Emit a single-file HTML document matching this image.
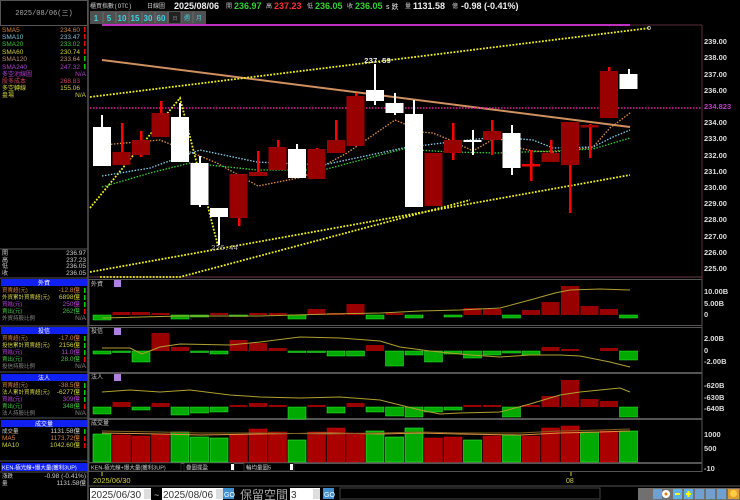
<!DOCTYPE html>
<html><head><meta charset="utf-8"><style>
html,body{margin:0;padding:0;background:#000;width:740px;height:500px;overflow:hidden}
svg{display:block}
text{font-family:"Liberation Sans","Noto Sans CJK TC",sans-serif}
.m{font-family:"Liberation Mono","Noto Sans CJK TC",monospace}
</style></head><body>
<svg width="740" height="500" viewBox="0 0 740 500" xmlns="http://www.w3.org/2000/svg">
<rect width="740" height="500" fill="#000"/>
<rect x="0.5" y="0.5" width="87" height="25" fill="#000" stroke="#555"/>
<text x="44" y="15" font-size="7" fill="#aaa" text-anchor="middle" class="m">2025/08/06(三)</text>
<line x1="88" y1="0" x2="88" y2="500" stroke="#555" stroke-width="1.5"/>
<g font-size="6.5" class="m">
<text x="2" y="32" fill="#d08040">SMA5</text><text x="80" y="32" fill="#d08040" text-anchor="end">234.60</text>
<text x="2" y="39" fill="#80c0e0">SMA10</text><text x="80" y="39" fill="#80c0e0" text-anchor="end">233.47</text>
<text x="2" y="46" fill="#40c040">SMA20</text><text x="80" y="46" fill="#40c040" text-anchor="end">233.02</text>
<text x="2" y="54" fill="#d0d040">SMA60</text><text x="80" y="54" fill="#d0d040" text-anchor="end">230.74</text>
<text x="2" y="61" fill="#c09070">SMA120</text><text x="80" y="61" fill="#c09070" text-anchor="end">233.64</text>
<text x="2" y="69" fill="#b040d0">SMA240</text><text x="80" y="69" fill="#b040d0" text-anchor="end">247.32</text>
<text x="2" y="76" fill="#b040d0" font-size="6">多空池線圖</text><text x="86" y="76" fill="#b040d0" text-anchor="end">N/A</text>
<text x="2" y="83" fill="#d04060" font-size="6">股多成本</text><text x="80" y="83" fill="#d04060" text-anchor="end">268.83</text>
<text x="2" y="90" fill="#d0d040" font-size="6">多空轉線</text><text x="80" y="90" fill="#d0d040" text-anchor="end">155.06</text>
<text x="2" y="97" fill="#d0d040" font-size="6">盎場</text><text x="86" y="97" fill="#d0d040" text-anchor="end">N/A</text>
</g>
<g fill="#e00"><rect x="84" y="27" width="1.5" height="5"/><rect x="84" y="34" width="1.5" height="5"/><rect x="84" y="41" width="1.5" height="5"/><rect x="84" y="49" width="1.5" height="5"/></g>
<g fill="#0c0"><rect x="84" y="56" width="1.5" height="5"/><rect x="84" y="64" width="1.5" height="5"/></g>
<line x1="0" y1="249" x2="88" y2="249" stroke="#555"/>
<g font-size="6.5" class="m" fill="#ccc">
<text x="2" y="255" font-size="6">開</text><text x="86" y="255" text-anchor="end">236.97</text>
<text x="2" y="262" font-size="6">高</text><text x="86" y="262" text-anchor="end">237.23</text>
<text x="2" y="268" font-size="6">低</text><text x="86" y="268" text-anchor="end">236.05</text>
<text x="2" y="275" font-size="6">收</text><text x="86" y="275" text-anchor="end">236.05</text>
</g>
<g font-size="6.5" class="m">
<rect x="1" y="279" width="86" height="7" fill="#1020f0"/><text x="44" y="285" fill="#fff" text-anchor="middle" font-size="6">外資</text>
<text x="2" y="292" fill="#d08040" font-size="5.5">買賣超(元)</text><text x="80" y="292" fill="#d08040" text-anchor="end">-12.8億</text>
<text x="2" y="299" fill="#d0d040" font-size="5.5">外資累計買賣超(元)</text><text x="80" y="299" fill="#d0d040" text-anchor="end">6898億</text>
<text x="2" y="306" fill="#b040d0" font-size="5.5">買進(元)</text><text x="80" y="306" fill="#b040d0" text-anchor="end">250億</text>
<text x="2" y="313" fill="#40c040" font-size="5.5">賣出(元)</text><text x="80" y="313" fill="#40c040" text-anchor="end">262億</text>
<text x="2" y="320" fill="#888" font-size="5.5">外資持股比例</text><text x="86" y="320" fill="#888" text-anchor="end">N/A</text>
<rect x="1" y="327" width="86" height="7" fill="#1020f0"/><text x="44" y="333" fill="#fff" text-anchor="middle" font-size="6">投信</text>
<text x="2" y="340" fill="#d08040" font-size="5.5">買賣超(元)</text><text x="80" y="340" fill="#d08040" text-anchor="end">-17.0億</text>
<text x="2" y="347" fill="#d0d040" font-size="5.5">投信累計買賣超(元)</text><text x="80" y="347" fill="#d0d040" text-anchor="end">2156億</text>
<text x="2" y="354" fill="#b040d0" font-size="5.5">買進(元)</text><text x="80" y="354" fill="#b040d0" text-anchor="end">11.0億</text>
<text x="2" y="361" fill="#40c040" font-size="5.5">賣出(元)</text><text x="80" y="361" fill="#40c040" text-anchor="end">28.0億</text>
<text x="2" y="368" fill="#888" font-size="5.5">投信持股比例</text><text x="86" y="368" fill="#888" text-anchor="end">N/A</text>
<rect x="1" y="374" width="86" height="7" fill="#1020f0"/><text x="44" y="380" fill="#fff" text-anchor="middle" font-size="6">法人</text>
<text x="2" y="387" fill="#d08040" font-size="5.5">買賣超(元)</text><text x="80" y="387" fill="#d08040" text-anchor="end">-38.5億</text>
<text x="2" y="394" fill="#d0d040" font-size="5.5">法人累計買賣超(元)</text><text x="80" y="394" fill="#d0d040" text-anchor="end">-6277億</text>
<text x="2" y="401" fill="#b040d0" font-size="5.5">買進(元)</text><text x="80" y="401" fill="#b040d0" text-anchor="end">309億</text>
<text x="2" y="408" fill="#40c040" font-size="5.5">賣出(元)</text><text x="80" y="408" fill="#40c040" text-anchor="end">348億</text>
<text x="2" y="415" fill="#888" font-size="5.5">法人持股比例</text><text x="86" y="415" fill="#888" text-anchor="end">N/A</text>
<rect x="1" y="420" width="86" height="7" fill="#1020f0"/><text x="44" y="426" fill="#fff" text-anchor="middle" font-size="6">成交量</text>
<text x="2" y="433" fill="#ccc" font-size="5.5">成交量</text><text x="80" y="433" fill="#ccc" text-anchor="end">1131.58億</text>
<text x="2" y="440" fill="#d08040">MA5</text><text x="80" y="440" fill="#d08040" text-anchor="end">1173.72億</text>
<text x="2" y="447" fill="#d0d040">MA10</text><text x="80" y="447" fill="#d0d040" text-anchor="end">1042.60億</text>
<rect x="1" y="463" width="86" height="8" fill="#1020f0"/><text x="2" y="469.5" fill="#fff" font-size="5.5">KEN-極光線+爆大量(獲利3UP)</text>
<text x="2" y="478" fill="#ccc" font-size="5.5">漲跌</text><text x="86" y="478" fill="#ccc" text-anchor="end">-0.98 (-0.41%)</text>
<text x="2" y="485" fill="#ccc" font-size="5.5">量</text><text x="86" y="485" fill="#ccc" text-anchor="end">1131.58億</text>
</g>
<g fill="#0c0"><rect x="84" y="288" width="1.5" height="5"/><rect x="84" y="295" width="1.5" height="5"/><rect x="84" y="302" width="1.5" height="5"/><rect x="84" y="336" width="1.5" height="5"/><rect x="84" y="343" width="1.5" height="5"/><rect x="84" y="350" width="1.5" height="5"/><rect x="84" y="383" width="1.5" height="5"/><rect x="84" y="390" width="1.5" height="5"/><rect x="84" y="397" width="1.5" height="5"/><rect x="84" y="429" width="1.5" height="5"/></g>
<g fill="#e00"><rect x="84" y="309" width="1.5" height="5"/><rect x="84" y="357" width="1.5" height="5"/><rect x="84" y="404" width="1.5" height="5"/><rect x="84" y="436" width="1.5" height="5"/><rect x="84" y="443" width="1.5" height="5"/></g>
<line x1="0" y1="278" x2="88" y2="278" stroke="#555"/><line x1="0" y1="326" x2="88" y2="326" stroke="#555"/><line x1="0" y1="372" x2="88" y2="372" stroke="#555"/><line x1="0" y1="418" x2="88" y2="418" stroke="#555"/><line x1="0" y1="461" x2="88" y2="461" stroke="#555"/><line x1="0" y1="472" x2="88" y2="472" stroke="#555"/>

<text x="90" y="8" fill="#ccc" font-size="6" class="m">櫃買指數(OTC)</text>
<text x="147" y="8" fill="#ccc" font-size="6" class="m">日線圖</text>
<text x="174" y="9" fill="#eee" font-size="9" font-weight="bold">2025/08/06</text>
<text x="226" y="8" fill="#ccc" font-size="6">開</text><text x="234" y="9" fill="#30d030" font-size="9" font-weight="bold">236.97</text>
<text x="266" y="8" fill="#ccc" font-size="6">高</text><text x="274" y="9" fill="#ff3030" font-size="9" font-weight="bold">237.23</text>
<text x="307" y="8" fill="#ccc" font-size="6">低</text><text x="315" y="9" fill="#30d030" font-size="9" font-weight="bold">236.05</text>
<text x="347" y="8" fill="#ccc" font-size="6">收</text><text x="355" y="9" fill="#30d030" font-size="9" font-weight="bold">236.05</text>
<text x="386" y="9" fill="#eee" font-size="7">s 跌</text>
<text x="405" y="8" fill="#ccc" font-size="6">量</text><text x="413" y="9" fill="#eee" font-size="9" font-weight="bold">1131.58</text>
<text x="452" y="8" fill="#ccc" font-size="6">億</text><text x="461" y="9" fill="#eee" font-size="9" font-weight="bold">-0.98 (-0.41%)</text>
<rect x="90" y="11" width="116" height="13" fill="#505050"/>
<g font-size="8" fill="#40d0e0" font-weight="bold" text-anchor="middle">
<text x="96" y="21">1</text><text x="109" y="21">5</text><text x="122" y="21">10</text><text x="135" y="21">15</text><text x="148" y="21">30</text><text x="161" y="21">60</text>
</g>
<rect x="169" y="12" width="12" height="11" fill="#222"/>
<text x="175" y="20" font-size="5" fill="#888" text-anchor="middle">日</text>
<text x="187" y="20" font-size="6" fill="#40d0e0" text-anchor="middle">週</text>
<text x="199" y="20" font-size="6" fill="#40d0e0" text-anchor="middle">月</text>
<g stroke="#777" stroke-width="0.7"><line x1="103" y1="12" x2="103" y2="23"/><line x1="116" y1="12" x2="116" y2="23"/><line x1="129" y1="12" x2="129" y2="23"/><line x1="142" y1="12" x2="142" y2="23"/><line x1="155" y1="12" x2="155" y2="23"/><line x1="168" y1="12" x2="168" y2="23"/><line x1="181" y1="12" x2="181" y2="23"/><line x1="193" y1="12" x2="193" y2="23"/></g>
<rect x="102" y="24" width="528" height="2" fill="#c030c0"/>
<line x1="630" y1="25" x2="702" y2="25" stroke="#5a2a3a"/>
<line x1="702" y1="25" x2="702" y2="462" stroke="#5a2a3a"/>
<line x1="88" y1="277" x2="702" y2="277" stroke="#6a3a4a"/>

<g font-size="7.5" fill="#ddd" class="m" font-weight="bold">
<text x="704" y="44">239.00</text><text x="704" y="60">238.00</text><text x="704" y="77">237.00</text><text x="704" y="93">236.00</text><text x="704" y="109" fill="#c040c0">234.823</text><text x="704" y="125">234.00</text><text x="704" y="141">233.00</text><text x="704" y="158">232.00</text><text x="704" y="174">231.00</text><text x="704" y="190">230.00</text><text x="704" y="206">229.00</text><text x="704" y="222">228.00</text><text x="704" y="239">227.00</text><text x="704" y="255">226.00</text><text x="704" y="271">225.00</text>
</g>

<path d="M102 60 Q370 95 630 127" stroke="#d09060" stroke-width="2" fill="none"/>
<line x1="90" y1="108" x2="702" y2="108" stroke="#e020a0" stroke-width="1.5" stroke-dasharray="1.5 1.5"/>
<g stroke="#f0f020" stroke-width="1.8" stroke-dasharray="1.8 1.5" fill="none">
<line x1="90" y1="97" x2="650" y2="28"/>
<line x1="90" y1="272" x2="630" y2="175"/>
<polyline points="100,277 180,277 470,200"/>
<polyline points="90,208 180,98 218,246"/>
</g>
<circle cx="649" cy="28" r="1.5" fill="none" stroke="#ddd" stroke-width="0.7"/>
<polyline points="102,145 160,140 190,152 217,163 258,186 303,177 347,153 395,120 407,125 420,132 433,133 450,140 473,151 497,137 515,147 533,151 553,152 573,150 593,147 610,128 630,113" stroke="#e09040" stroke-width="1.3" stroke-dasharray="1.5 1.5" fill="none"/>
<polyline points="102,176 150,168 200,150 257,162 323,165 403,148 450,142 497,137 533,140 553,148 593,147 613,137 630,130" stroke="#80d0f0" stroke-width="1.3" stroke-dasharray="1.5 1.5" fill="none"/>
<polyline points="102,187 150,173 190,163 257,170 323,170 403,149 450,152 497,153 553,151 593,149 630,138" stroke="#30d030" stroke-width="1.3" stroke-dasharray="1.5 1.5" fill="none"/>

<g>
<rect x="101" y="115" width="2" height="51" fill="#fff"/><rect x="93" y="127" width="18" height="39" fill="#fff"/>
<rect x="121" y="123" width="2.5" height="42" fill="#f00"/><rect x="112.5" y="152" width="18" height="13" fill="#900"/>
<rect x="140" y="131" width="2.5" height="26" fill="#f00"/><rect x="132" y="140" width="18" height="15" fill="#900"/>
<rect x="160" y="101" width="2.5" height="36" fill="#f00"/><rect x="151.5" y="113" width="18" height="24" fill="#900"/>
<rect x="179" y="103" width="2" height="59" fill="#fff"/><rect x="171" y="117" width="18" height="45" fill="#fff"/>
<rect x="199" y="156" width="2" height="51" fill="#fff"/><rect x="190.5" y="163" width="18" height="42" fill="#fff"/>
<rect x="218" y="208" width="2" height="37" fill="#fff"/><rect x="210" y="208" width="18" height="9" fill="#fff"/>
<rect x="238" y="174" width="2.5" height="52" fill="#f00"/><rect x="229.5" y="174" width="18" height="44" fill="#900"/>
<rect x="257" y="151" width="2.5" height="25" fill="#f00"/><rect x="249" y="172" width="18" height="4" fill="#900"/>
<rect x="277" y="140" width="2.5" height="30" fill="#f00"/><rect x="268.5" y="147" width="18" height="23" fill="#900"/>
<rect x="296" y="144" width="2" height="34" fill="#fff"/><rect x="288" y="149" width="18" height="29" fill="#fff"/>
<rect x="316" y="148" width="2.5" height="31" fill="#f00"/><rect x="307.5" y="149" width="18" height="30" fill="#900"/>
<rect x="335" y="120" width="2.5" height="33" fill="#f00"/><rect x="327" y="140" width="18" height="13" fill="#900"/>
<rect x="355" y="93" width="2.5" height="53" fill="#f00"/><rect x="346.5" y="96" width="18" height="50" fill="#900"/>
<rect x="374" y="64" width="2" height="41" fill="#fff"/><rect x="366" y="90" width="18" height="11" fill="#fff"/>
<rect x="394" y="93" width="2" height="22" fill="#fff"/><rect x="385.5" y="103" width="18" height="10" fill="#fff"/>
<rect x="413" y="100" width="2" height="107" fill="#fff"/><rect x="405" y="114" width="18" height="93" fill="#fff"/>
<rect x="424.5" y="153" width="18" height="53" fill="#900"/>
<rect x="452" y="123" width="2.5" height="37" fill="#f00"/><rect x="444" y="140" width="18" height="13" fill="#900"/>
<rect x="472" y="130" width="2" height="25" fill="#fff"/><rect x="463.5" y="140" width="18" height="2" fill="#fff"/>
<rect x="491" y="120" width="2.5" height="35" fill="#f00"/><rect x="483" y="131" width="18" height="9" fill="#900"/>
<rect x="511" y="125" width="2" height="50" fill="#fff"/><rect x="502.5" y="133" width="18" height="35" fill="#fff"/>
<rect x="530" y="150" width="2.5" height="31" fill="#f00"/><rect x="522" y="164" width="18" height="2.5" fill="#e00"/>
<rect x="550" y="140" width="2.5" height="22" fill="#f00"/><rect x="541.5" y="153" width="18" height="9" fill="#900"/>
<rect x="569" y="122" width="2.5" height="91" fill="#f00"/><rect x="561" y="122" width="18" height="43" fill="#900"/>
<rect x="589" y="124" width="2.5" height="34" fill="#f00"/><rect x="580.5" y="125" width="18" height="2.5" fill="#900"/>
<rect x="608" y="67" width="2.5" height="51" fill="#f00"/><rect x="600" y="71" width="18" height="47" fill="#900"/>
<rect x="628" y="69" width="2" height="20" fill="#fff"/><rect x="619.5" y="74" width="18" height="15" fill="#fff"/>
</g>
<text x="364" y="63" font-size="7.5" fill="#eee" class="m" font-weight="bold">237.59</text>
<text x="211" y="250" font-size="7.5" fill="#bbb" class="m">226.44</text>

<g fill="none" stroke="#555" stroke-width="1">
<rect x="89" y="279.5" width="613" height="46"/>
<rect x="89" y="327.5" width="613" height="45"/>
<rect x="89" y="373.5" width="613" height="45"/>
<rect x="89" y="419.5" width="613" height="43"/>
<rect x="89" y="463.5" width="613" height="8"/>
</g>
<g font-size="6" fill="#ccc" class="m">
<text x="91" y="286">外資</text><text x="91" y="333">投信</text><text x="91" y="379">法人</text><text x="91" y="425">成交量</text>
</g>
<g fill="#b080e0"><rect x="114" y="280" width="7" height="7"/><rect x="114" y="328" width="7" height="7"/><rect x="114" y="374" width="7" height="7"/></g>
<g font-size="7.5" fill="#ddd" class="m" font-weight="bold">
<text x="704" y="294">10.00B</text><text x="704" y="306">5.00B</text><text x="704" y="317">0</text>
<text x="704" y="341">2.00B</text><text x="704" y="353">0</text><text x="704" y="364">-2.00B</text>
<text x="704" y="388">-620B</text><text x="704" y="400">-630B</text><text x="704" y="411">-640B</text>
<text x="704" y="437">1000</text><text x="704" y="451">500</text><text x="704" y="471">-10</text>
</g>

<g fill="#0a0" stroke="#3e3" stroke-width="0.5">
<rect x="93" y="315" width="18" height="5"/><rect x="171" y="315" width="18" height="4"/><rect x="190.5" y="315" width="18" height="2"/><rect x="229.5" y="315" width="18" height="1.5"/><rect x="288" y="315" width="18" height="4"/><rect x="366" y="315" width="18" height="4"/><rect x="405" y="315" width="18" height="3"/><rect x="444" y="315" width="18" height="2"/><rect x="502.5" y="315" width="18" height="3"/><rect x="619.5" y="315" width="18" height="3"/>
</g>
<g fill="#900">
<rect x="112.5" y="312" width="18" height="3"/><rect x="132" y="312" width="18" height="3"/><rect x="151.5" y="313" width="18" height="2"/><rect x="210" y="313" width="18" height="2"/><rect x="249" y="313" width="18" height="2"/><rect x="268.5" y="313" width="18" height="2"/><rect x="307.5" y="309" width="18" height="6"/><rect x="327" y="313" width="18" height="2"/><rect x="346.5" y="304" width="18" height="11"/><rect x="385.5" y="313" width="18" height="2"/><rect x="463.5" y="308" width="18" height="7"/><rect x="483" y="309" width="18" height="6"/><rect x="522" y="310" width="18" height="5"/><rect x="541.5" y="302" width="18" height="13"/><rect x="561" y="286" width="18" height="29"/><rect x="580.5" y="306" width="18" height="9"/><rect x="600" y="309" width="18" height="6"/>
</g>
<polyline points="102,318 180,316 260,316 330,314 380,313 420,311 460,310 500,308 530,300 555,293 570,290 600,289 630,290" stroke="#b0a030" stroke-width="1" fill="none"/>

<g fill="#0a0" stroke="#3e3" stroke-width="0.5">
<rect x="93" y="351" width="18" height="3"/><rect x="112.5" y="351" width="18" height="1.5"/><rect x="132" y="351" width="18" height="11"/><rect x="190.5" y="351" width="18" height="1.5"/><rect x="210" y="351" width="18" height="3"/><rect x="288" y="351" width="18" height="1.5"/><rect x="307.5" y="351" width="18" height="1.5"/><rect x="327" y="351" width="18" height="5"/><rect x="346.5" y="351" width="18" height="5"/><rect x="385.5" y="351" width="18" height="15"/><rect x="405" y="351" width="18" height="4"/><rect x="424.5" y="351" width="18" height="11"/><rect x="444" y="351" width="18" height="3"/><rect x="463.5" y="351" width="18" height="7"/><rect x="483" y="351" width="18" height="4"/><rect x="502.5" y="351" width="18" height="2"/><rect x="522" y="351" width="18" height="4"/><rect x="619.5" y="351" width="18" height="9"/>
</g>
<g fill="#900">
<rect x="151.5" y="333" width="18" height="18"/><rect x="171" y="347" width="18" height="4"/><rect x="229.5" y="340" width="18" height="11"/><rect x="249" y="343" width="18" height="8"/><rect x="268.5" y="348" width="18" height="3"/><rect x="366" y="345" width="18" height="6"/><rect x="541.5" y="347" width="18" height="4"/><rect x="561" y="349" width="18" height="2"/><rect x="600" y="348" width="18" height="3"/>
</g>
<polyline points="102,348 130,348 142,354 160,347 180,344 230,345 260,342 300,337 340,338 380,341 400,347 430,351 470,355 500,357 530,355 560,355 580,356 610,362 630,367" stroke="#b0a030" stroke-width="1" fill="none"/>

<g fill="#0a0" stroke="#3e3" stroke-width="0.5">
<rect x="93" y="407" width="18" height="7"/><rect x="132" y="407" width="18" height="3"/><rect x="171" y="407" width="18" height="8"/><rect x="190.5" y="407" width="18" height="6"/><rect x="210" y="407" width="18" height="5"/><rect x="288" y="407" width="18" height="12"/><rect x="327" y="407" width="18" height="6"/><rect x="366" y="407" width="18" height="5"/><rect x="385.5" y="407" width="18" height="9"/><rect x="405" y="407" width="18" height="10"/><rect x="424.5" y="407" width="18" height="5"/><rect x="444" y="407" width="18" height="3"/><rect x="502.5" y="407" width="18" height="10"/><rect x="619.5" y="407" width="18" height="10"/>
</g>
<g fill="#900">
<rect x="112.5" y="402" width="18" height="5"/><rect x="151.5" y="403" width="18" height="4"/><rect x="229.5" y="405" width="18" height="2"/><rect x="249" y="403" width="18" height="4"/><rect x="268.5" y="405" width="18" height="2"/><rect x="307.5" y="405" width="18" height="2"/><rect x="346.5" y="403" width="18" height="4"/><rect x="463.5" y="405" width="18" height="2"/><rect x="483" y="405" width="18" height="2"/><rect x="522" y="405" width="18" height="2"/><rect x="541.5" y="396" width="18" height="11"/><rect x="561" y="380" width="18" height="27"/><rect x="580.5" y="399" width="18" height="8"/><rect x="600" y="401" width="18" height="6"/>
</g>
<polyline points="102,392 130,390 160,392 190,390 230,395 260,397 300,398 340,397 380,400 400,405 420,410 440,414 460,413 500,412 530,404 560,395 580,392 600,390 620,388 630,392" stroke="#b0a030" stroke-width="1" fill="none"/>

<g fill="#0a0" stroke="#3e3" stroke-width="0.6">
<rect x="93" y="434" width="18" height="28"/><rect x="171" y="432" width="18" height="30"/><rect x="190.5" y="437" width="18" height="25"/><rect x="210" y="438" width="18" height="24"/><rect x="288" y="440" width="18" height="22"/><rect x="366" y="431" width="18" height="31"/><rect x="385.5" y="437" width="18" height="25"/><rect x="405" y="428" width="18" height="34"/><rect x="463.5" y="440" width="18" height="22"/><rect x="502.5" y="435" width="18" height="27"/><rect x="580.5" y="432" width="18" height="30"/><rect x="619.5" y="431" width="18" height="31"/>
</g>
<g fill="#a00" stroke="#c00" stroke-width="0.5">
<rect x="112.5" y="435" width="18" height="27"/><rect x="132" y="436" width="18" height="26"/><rect x="151.5" y="434" width="18" height="28"/><rect x="229.5" y="435" width="18" height="27"/><rect x="249" y="429" width="18" height="33"/><rect x="268.5" y="432" width="18" height="30"/><rect x="307.5" y="432" width="18" height="30"/><rect x="327" y="428" width="18" height="34"/><rect x="346.5" y="433" width="18" height="29"/><rect x="424.5" y="438" width="18" height="24"/><rect x="444" y="437" width="18" height="25"/><rect x="483" y="436" width="18" height="26"/><rect x="522" y="436" width="18" height="26"/><rect x="541.5" y="428" width="18" height="34"/><rect x="561" y="426" width="18" height="36"/><rect x="600" y="431" width="18" height="31"/>
</g>
<polyline points="102,433 160,434 200,435 260,434 330,433 380,434 420,433 460,434 520,435 560,433 600,432 630,431" stroke="#e09040" stroke-width="1" fill="none"/>
<polyline points="102,431 160,432 200,433 260,433 330,434 380,433 420,432 460,433 520,433 560,431 600,430 630,429" stroke="#806020" stroke-width="1" fill="none"/>

<rect x="89" y="463" width="92" height="8" fill="#000" stroke="#555" stroke-width="0.5"/>
<text x="91" y="469.5" font-size="5.5" fill="#ccc">KEN-極光線+爆大量(獲利3UP)</text>
<rect x="184" y="463" width="50" height="8" fill="#000" stroke="#555" stroke-width="0.5"/><text x="186" y="469.5" font-size="5.5" fill="#ccc">疊圖擺盈</text>
<rect x="231" y="464" width="3" height="6" fill="#fff"/>
<rect x="244" y="463" width="50" height="8" fill="#000" stroke="#555" stroke-width="0.5"/><text x="246" y="469.5" font-size="5.5" fill="#ccc">輪均量圖5</text>
<rect x="290" y="464" width="3" height="6" fill="#fff"/>
<line x1="571" y1="472" x2="571" y2="476" stroke="#d0d040"/>
<line x1="102" y1="472" x2="102" y2="476" stroke="#d0d040"/>
<text x="93" y="483" font-size="7.5" fill="#d0d040">2025/06/30</text>
<text x="566" y="483" font-size="7" fill="#d0d040">08</text>

<line x1="88" y1="486" x2="740" y2="486" stroke="#555"/>
<rect x="90" y="488" width="61" height="12" fill="#fff"/><text x="91" y="498" font-size="10" fill="#333">2025/06/30</text><rect x="144" y="489" width="7" height="10" fill="#ddd"/>
<text x="154" y="498" font-size="9" fill="#ccc">~</text>
<rect x="162" y="488" width="61" height="12" fill="#fff"/><text x="163" y="498" font-size="10" fill="#333">2025/08/06</text><rect x="216" y="489" width="7" height="10" fill="#ddd"/>
<rect x="223" y="488" width="11" height="11" fill="#4090d0"/><text x="224" y="497" font-size="7" fill="#fff">GO</text>
<text x="240" y="499" font-size="12" fill="#aaa">保留空間</text>
<rect x="290" y="488" width="30" height="12" fill="#fff"/><text x="291" y="498" font-size="10" fill="#333">3</text><rect x="313" y="489" width="7" height="10" fill="#ddd"/>
<rect x="323" y="488" width="11" height="11" fill="#4090d0"/><text x="324" y="497" font-size="7" fill="#fff">GO</text>
<rect x="340" y="488" width="260" height="11" fill="#000" stroke="#444"/>
<rect x="638" y="488" width="102" height="12" fill="#707070"/>
<g>
<rect x="653" y="489" width="9" height="10" fill="#70a0d0"/><circle cx="666" cy="494" r="4" fill="#fff"/><circle cx="666" cy="494" r="1.5" fill="#e08000"/>
<rect x="673" y="489" width="9" height="10" fill="#60b0e0"/><rect x="675" y="493" width="5" height="2" fill="#ff0"/>
<rect x="684" y="489" width="9" height="10" fill="#60b0e0"/><rect x="686" y="493" width="5" height="2" fill="#ff0"/><rect x="687.5" y="491" width="2" height="6" fill="#ff0"/>
<rect x="695" y="489" width="9" height="10" fill="#70a0d0"/><rect x="706" y="489" width="9" height="10" fill="#70a0d0"/><rect x="717" y="489" width="9" height="10" fill="#70a0d0"/>
<rect x="728" y="489" width="11" height="10" fill="#e0a030"/><circle cx="733.5" cy="493.5" r="3.5" fill="#fc4"/>
</g>
</svg>
</body></html>
